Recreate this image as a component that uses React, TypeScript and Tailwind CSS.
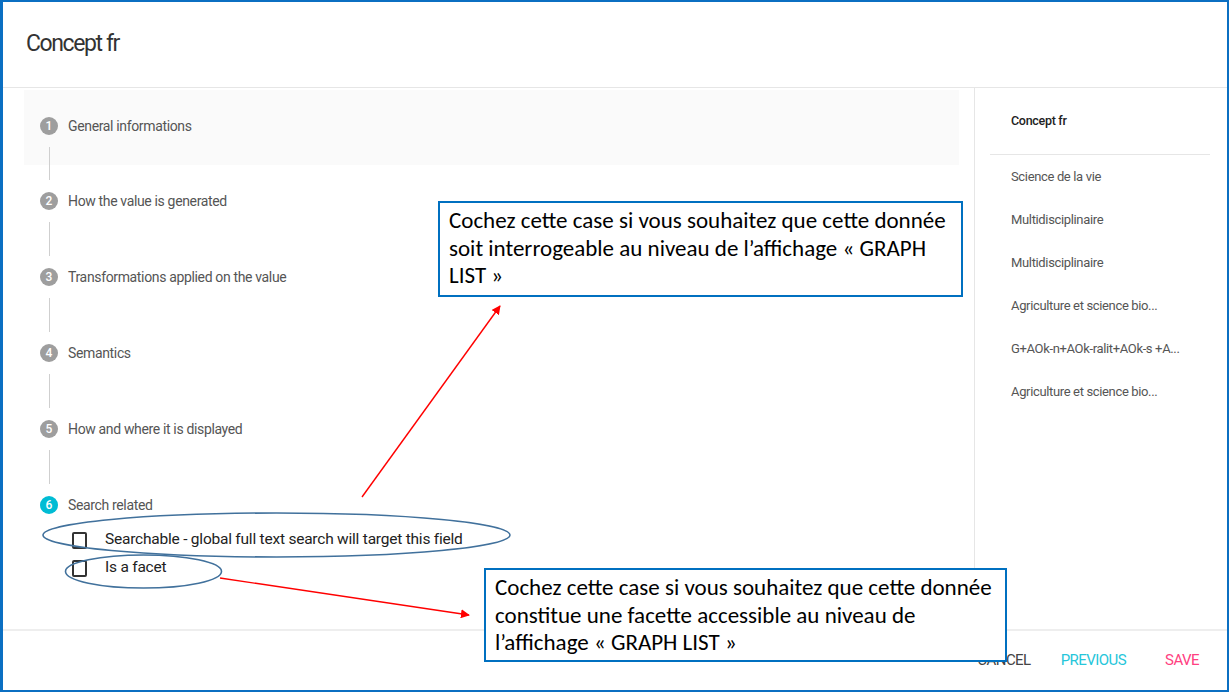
import React from "react";

const STEPS = [
  "General informations",
  "How the value is generated",
  "Transformations applied on the value",
  "Semantics",
  "How and where it is displayed",
  "Search related",
];

const SIDE_ITEMS = [
  "Science de la vie",
  "Multidisciplinaire",
  "Multidisciplinaire",
  "Agriculture et science bio...",
  "G+AOk-n+AOk-ralit+AOk-s +A...",
  "Agriculture et science bio...",
];

function StepRow({ n, label, active }: { n: number; label: string; active?: boolean }) {
  return (
    <div className="flex h-[18px] items-center gap-[10px]">
      <div
        className={`flex h-[18px] w-[18px] items-center justify-center rounded-full text-[12px] font-medium text-white ${
          active ? "bg-[#00bcd4]" : "bg-[#9e9e9e]"
        }`}
      >
        {n}
      </div>
      <span className="text-[14px] tracking-[-0.35px] text-[#555]">{label}</span>
    </div>
  );
}

function Checkbox({ label }: { label: string }) {
  return (
    <div className="flex h-[28px] items-center gap-[18px]">
      <div className="h-[17px] w-[15px] rounded-[2px] border-2 border-[#333]" />
      <span className="text-[15.5px] tracking-[-0.22px] text-[#222]">{label}</span>
    </div>
  );
}

function Callout({ className, lines }: { className: string; lines: string[] }) {
  return (
    <div
      className={`absolute border-2 border-[#0070c0] bg-white pl-[9px] pt-[4px] font-['Carlito','Lato',sans-serif] text-[23px] leading-[27.5px] text-black ${className}`}
    >
      {lines.map((l, i) => (
        <div key={i} className="whitespace-nowrap">
          {l}
        </div>
      ))}
    </div>
  );
}

export default function App() {
  return (
    <div className="relative h-[692px] w-[1229px] overflow-hidden bg-white font-['Roboto',sans-serif]">
      <div className="flex h-full flex-col border-2 border-l-[3px] border-[#0b6fc2]">
        {/* HEADER */}
        <div className="flex h-[85px] items-center pl-[23px] text-[23px] tracking-[-1.4px] text-[#333]">
          Concept fr
        </div>
        <div className="h-px bg-[#e6e6e6]" />

        {/* BODY */}
        <div className="flex h-[541px]">
          {/* LEFT - stepper */}
          <div className="flex-1 pl-[21px] pr-[15px] pt-[2px]">
            <div className="h-[75px] bg-[#fafafa] pl-[16px] pt-[27px]">
              <StepRow n={1} label={STEPS[0]} />
              <div className="ml-[9px] mt-[12px] h-[18px] w-px bg-[#cfcfcf]" />
            </div>
            <div className="pl-[16px]">
              <div className="ml-[9px] h-[15px] w-px bg-[#cfcfcf]" />
              <div className="h-[12px]" />
              {STEPS.slice(1).map((s, i) => (
                <div key={s}>
                  <StepRow n={i + 2} label={s} active={i === 4} />
                  {i < 4 && (
                    <div className="py-[12px]">
                      <div className="ml-[9px] h-[34px] w-px bg-[#cfcfcf]" />
                    </div>
                  )}
                </div>
              ))}
            </div>
            <div className="mt-[12px] pl-[48px]">
              <Checkbox label="Searchable - global full text search will target this field" />
              <Checkbox label="Is a facet" />
            </div>
          </div>

          {/* RIGHT - preview */}
          <div className="w-[253px] border-l border-[#e6e6e6] pl-[15px] pr-[17px]">
            <div className="flex h-[67px] items-center border-b border-[#e6e6e6] pl-[21px] text-[12.5px] font-medium tracking-[-0.3px] text-[#222]">
              Concept fr
            </div>
            {SIDE_ITEMS.map((t, i) => (
              <div
                key={i}
                className="flex h-[43px] items-center pl-[21px] text-[13px] tracking-[-0.35px] text-[#555]"
              >
                {t}
              </div>
            ))}
          </div>
        </div>

        {/* FOOTER */}
        <div className="h-[2px] bg-[#eeeeee]" />
        <div className="flex flex-1 items-center justify-end pr-[28px] text-[15px] tracking-[-0.55px]">
          <button className="text-[#444]">CANCEL</button>
          <button className="ml-[30px] text-[#26c6da]">PREVIOUS</button>
          <button className="ml-[39px] text-[#ff4081]">SAVE</button>
        </div>
      </div>

      {/* ANNOTATIONS */}
      <svg
        className="pointer-events-none absolute inset-0"
        width="1229"
        height="692"
        viewBox="0 0 1229 692"
      >
        <defs>
          <marker
            id="arrow"
            viewBox="0 0 10 10"
            refX="9"
            refY="5"
            markerWidth="9"
            markerHeight="9"
            markerUnits="userSpaceOnUse"
            orient="auto"
          >
            <path d="M0 0 L10 5 L0 10 z" fill="#ff0000" />
          </marker>
        </defs>
        <ellipse cx="276.5" cy="535" rx="233.5" ry="22" fill="none" stroke="#41719c" strokeWidth="1.6" />
        <ellipse cx="143.5" cy="571.5" rx="78" ry="16.5" fill="none" stroke="#41719c" strokeWidth="1.6" />
        <line x1="362" y1="497" x2="500" y2="306" stroke="#ff0000" strokeWidth="1.4" markerEnd="url(#arrow)" />
        <line x1="220" y1="578" x2="469" y2="615" stroke="#ff0000" strokeWidth="1.4" markerEnd="url(#arrow)" />
      </svg>

      <Callout
        className="left-[438px] top-[201px] h-[96px] w-[525px]"
        lines={[
          "Cochez cette case si vous souhaitez que cette donnée",
          "soit interrogeable au niveau de l’affichage « GRAPH",
          "LIST »",
        ]}
      />
      <Callout
        className="left-[484px] top-[568px] h-[94px] w-[523px]"
        lines={[
          "Cochez cette case si vous souhaitez que cette donnée",
          "constitue une facette accessible au niveau de",
          "l’affichage « GRAPH LIST »",
        ]}
      />
    </div>
  );
}
